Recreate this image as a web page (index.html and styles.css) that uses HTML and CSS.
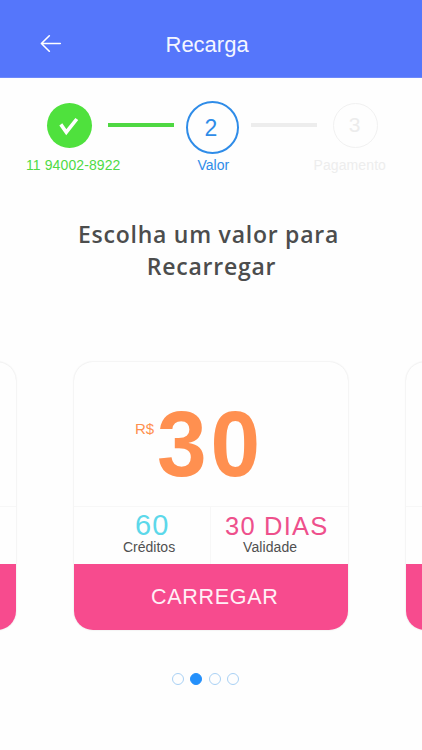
FILE: index.html
```html
<!DOCTYPE html>
<html lang="pt-BR">
<head>
<meta charset="utf-8">
<meta name="viewport" content="width=device-width, initial-scale=1">
<title>Recarga</title>
<link rel="stylesheet" href="styles.css">
</head>
<body>
<header class="header">
  <svg class="back" viewBox="0 0 22 18" fill="none" stroke="#fff" stroke-width="1.6" stroke-linecap="round" stroke-linejoin="round"><path d="M20.3 9.5H1.4M9.3 1.8L1.4 9.5l7.9 7.7"/></svg>
  <h1 class="title">Recarga</h1>
</header>
<main>
  <section class="stepper">
    <div class="track">
      <div class="circle done"><svg viewBox="0 0 45 45" fill="none" stroke="#fff" stroke-width="3.6"><path d="M13.8 21.4L19.3 29.2L29.8 16"/></svg></div>
      <div class="line line-done"></div>
      <div class="circle current">2</div>
      <div class="line"></div>
      <div class="circle pending">3</div>
    </div>
    <div class="labels">
      <span class="label-done">11 94002-8922</span>
      <span class="label-current">Valor</span>
      <span class="label-pending">Pagamento</span>
    </div>
  </section>
  <h2 class="heading"><span>Escolha um valor para</span><span class="heading-end">Recarregar</span></h2>
  <section class="carousel">
    <article class="card"><div class="price"></div><div class="details"></div><div class="button"></div></article>
    <article class="card">
      <div class="price"><span class="currency">R$</span><strong class="amount">30</strong></div>
      <div class="details">
        <div class="detail credits"><span class="value">60</span><span class="caption">Créditos</span></div>
        <div class="detail validity"><span class="value">30 DIAS</span><span class="caption">Validade</span></div>
      </div>
      <div class="button">CARREGAR</div>
    </article>
    <article class="card"><div class="price"></div><div class="details"></div><div class="button"></div></article>
  </section>
  <nav class="dots"><i></i><i class="active"></i><i></i><i></i></nav>
</main>
</body>
</html>
```
FILE: styles.css
```css
* { box-sizing: border-box; }
body {
  margin: 0;
  height: 750px;
  overflow: hidden;
  background: #fefefe;
  font-family: "Liberation Sans", Arial, sans-serif;
}
h1, h2 { margin: 0; font-weight: 400; }
.header {
  display: flex;
  height: 78px;
  padding-left: 40px;
  background: #5576fb;
  border-bottom: 1px solid #6d89fb;
  color: #f4f6ff;
}
.back { width: 22px; height: 18px; margin-top: 34px; }
.title { margin: 32px 0 0 103.5px; font-size: 22px; line-height: 26px; }
.stepper { padding-top: 23px; }
.track { display: flex; height: 53px; padding-left: 47px; }
.circle {
  display: flex;
  justify-content: center;
  flex: none;
  width: 45px;
  height: 45px;
  margin-top: 2px;
  border-radius: 50%;
}
.done { background: #4fe13d; }
.done svg { width: 45px; height: 45px; }
.current {
  width: 53px;
  height: 53px;
  margin-top: 0;
  padding-right: 3px;
  border: 2px solid #2f8ce8;
  color: #2f8ce8;
  font-size: 23px;
  line-height: 50px;
}
.pending {
  padding-right: 2px;
  border: 1px solid #f1f1f1;
  color: #ececec;
  font-size: 21px;
  line-height: 41px;
}
.line {
  flex: none;
  width: 66px;
  height: 4px;
  margin: 22px 12px 0;
  background: #ededed;
}
.line-done { margin-left: 16px; background: #4fd842; }
.line:nth-child(4) { margin-right: 16px; }
.labels {
  display: flex;
  padding: 2px 0 0 26px;
  font-size: 14px;
  line-height: 18px;
}
.label-done { width: 171.5px; color: #4fda45; letter-spacing: 0.1px; }
.label-current { width: 116px; color: #2f8ce8; }
.label-pending { color: #ededed; letter-spacing: 0.1px; }
.heading {
  display: flex;
  flex-direction: column;
  align-items: center;
  margin-top: 44px;
  padding-right: 5px;
  color: #4c4d4d;
  font: 600 23px/32px "Open Sans", sans-serif;
  letter-spacing: 0.75px;
}
.heading-end { padding-left: 6px; }
.carousel {
  display: flex;
  justify-content: center;
  gap: 58px;
  margin-top: 76px;
  padding: 4px 0;
  overflow: hidden;
}
.card {
  flex: none;
  width: 274px;
  height: 268px;
  border-radius: 19px;
  background: #fefefe;
  box-shadow: 0 0 2px rgba(0, 0, 0, 0.14);
  overflow: hidden;
}
.price {
  display: flex;
  height: 145px;
  padding: 30px 0 0 61px;
  border-bottom: 1px solid #f7f7f7;
  color: #ff9050;
}
.currency { width: 22px; padding-top: 28px; font-size: 15px; line-height: 18px; }
.amount { font-size: 92px; line-height: 104px; letter-spacing: 4px; transform: scaleX(0.97); transform-origin: left; }
.details { display: flex; height: 57px; }
.detail { display: flex; flex-direction: column; width: 137px; }
.credits { border-right: 1px solid #f7f7f7; }
.credits .value { padding-left: 61px; color: #5cd8ea; font-size: 29px; letter-spacing: 1px; }
.credits .caption { padding-left: 49px; }
.validity .value { padding: 1px 0 0 14px; color: #ee508c; font-size: 25.5px; letter-spacing: 1.2px; }
.validity .caption { padding-left: 32px; letter-spacing: 0.1px; }
.value { height: 31px; line-height: 37px; white-space: nowrap; }
.caption { color: #505050; font-size: 14px; line-height: 18px; }
.button {
  height: 66px;
  padding-left: 77px;
  background: #f74b8e;
  color: #fff0f6;
  font-size: 21.5px;
  line-height: 66px;
  letter-spacing: 0.7px;
}
.dots { display: flex; justify-content: center; gap: 6.4px; padding-right: 11px; margin-top: 39px; }
.dots i { width: 12px; height: 12px; border: 1px solid #a9d1f5; border-radius: 50%; }
.dots .active { border-color: #2490fb; background: #2490fb; }
```
